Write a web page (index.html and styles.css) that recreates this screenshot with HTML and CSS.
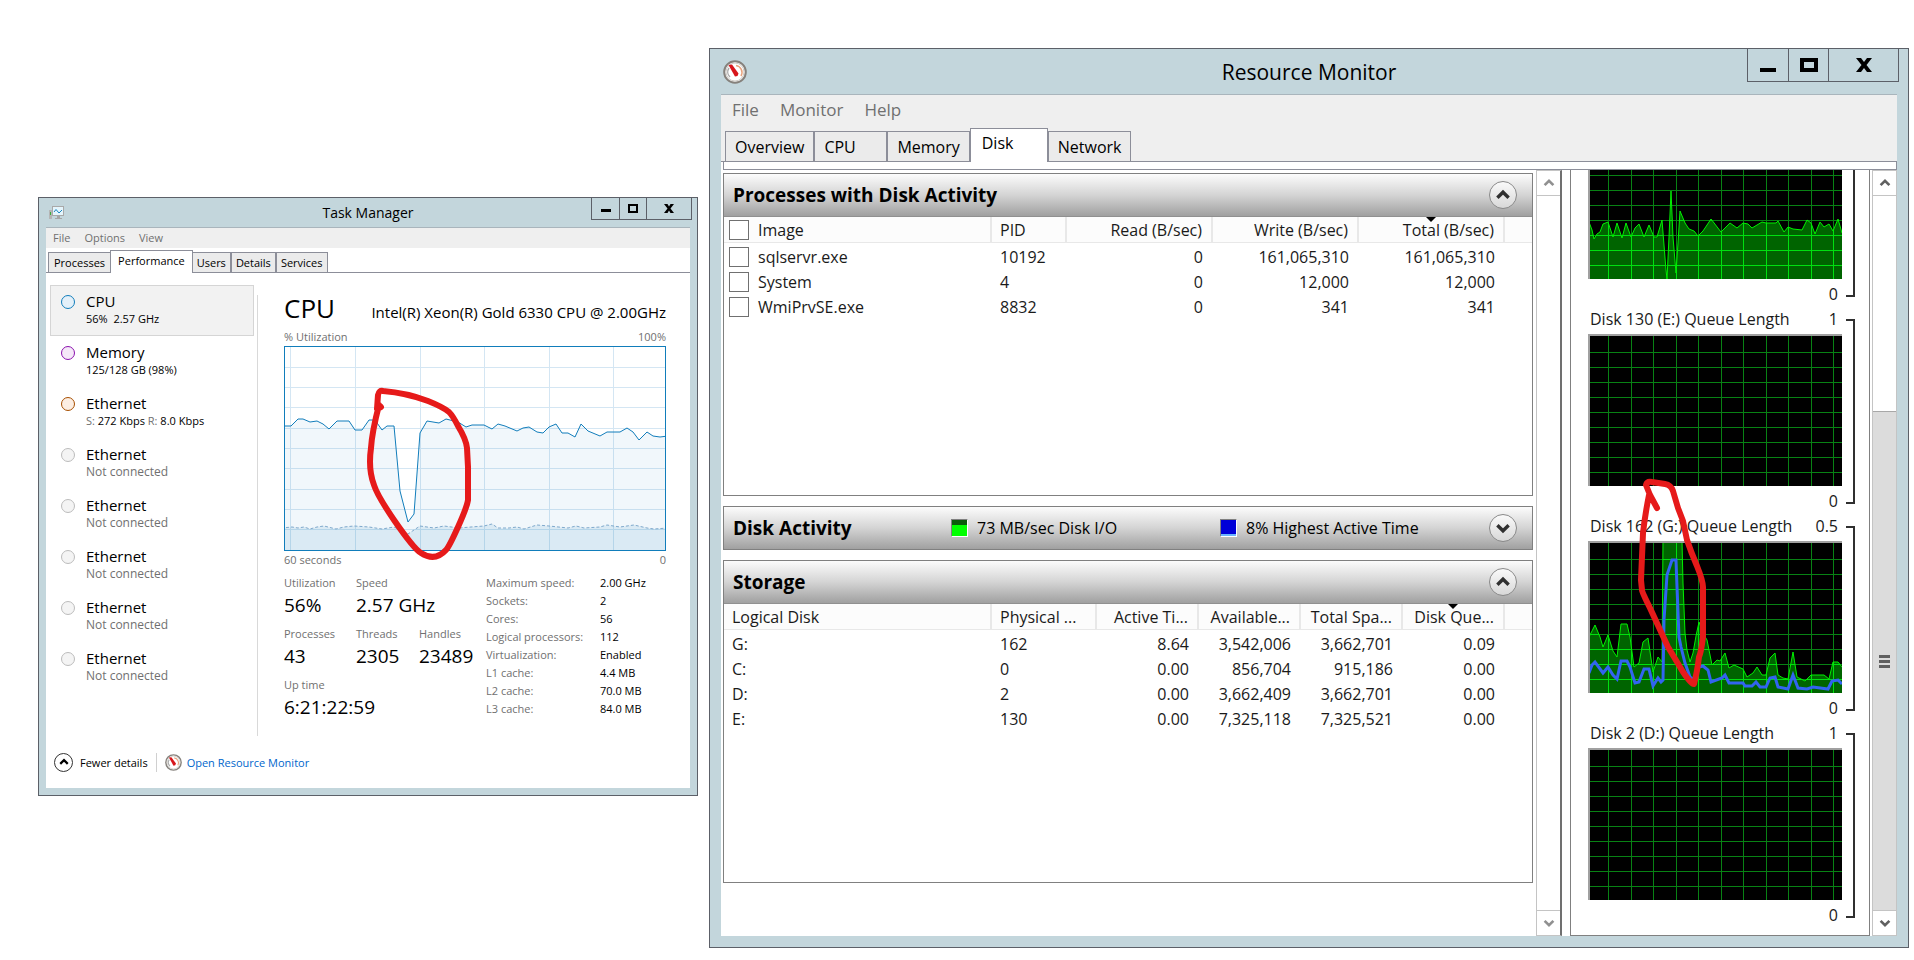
FILE: index.html
```
<!DOCTYPE html>
<html lang="en">
<head>
    <meta charset="UTF-8">
    <meta name="viewport" content="width=device-width, initial-scale=1.0">
    <title>Task Manager and Resource Monitor</title>
    <link rel="stylesheet" href="styles.css">
</head>
<body>
    <!-- Shared shapes -->
    <svg class="defs" width="0" height="0" aria-hidden="true">
        <defs>
            <path id="disk-grid" d="M20.5 0V152M43.5 0V152M65.5 0V152M88.5 0V152M110.5 0V152M133.5 0V152M155.5 0V152M178.5 0V152M200.5 0V152M223.5 0V152M245.5 0V152M0 18.5H254M0 33.5H254M0 48.5H254M0 63.5H254M0 78.5H254M0 93.5H254M0 108.5H254M0 123.5H254M0 138.5H254"/>
            <symbol id="gauge" viewBox="0 0 24 24">
                <circle cx="12" cy="12" r="10.8" fill="#f6f4f2" stroke="#85817c" stroke-width="2"/>
                <circle cx="12" cy="12" r="9" fill="#fff" stroke="#d0cdc8"/>
                <path d="M7 17A7 7 0 0 1 6 8" fill="none" stroke="#a9a9a9" stroke-width="1.5"/>
                <path d="M13 5.500A7 7 0 0 1 18 16" fill="none" stroke="#e8a27c" stroke-width="1.500"/>
                <path d="M5.500 5L9 4.500L15.500 13.500L14.500 16L12 16.500Z" fill="#d8161c"/>
            </symbol>
            <symbol id="up" viewBox="0 0 16 16"><path d="M3 10.500L8 5.500L13 10.500" fill="none" stroke="currentColor" stroke-width="3"/></symbol>
            <symbol id="down" viewBox="0 0 16 16"><path d="M3 5.500L8 10.500L13 5.500" fill="none" stroke="currentColor" stroke-width="3"/></symbol>
        </defs>
    </svg>

    <main class="desktop">
        <section class="window task-manager">
            <header class="title-bar">
                <svg class="title-icon" width="17" height="16" viewBox="0 0 17 16">
                    <rect x="1" y="5" width="3" height="9" fill="#b5b5b5"/>
                    <rect x="2" y="7" width="1" height="3" fill="#3cae3c"/>
                    <rect x="4.500" y="1.500" width="11" height="9" fill="#e4f5fc" stroke="#a9a9a9"/>
                    <path d="M6 7L8 4.500L11 8L14 5" fill="none" stroke="#1b87c0"/>
                    <path d="M9 11H12V13H14V14H7V13H9Z" fill="#a5a5a5"/>
                </svg>
                <h1>Task Manager</h1>
                <div class="caption-buttons">
                    <button aria-label="Minimize"><svg width="10" height="9" viewBox="0 0 10 9"><path d="M0 5H10V8H0Z"/></svg></button>
                    <button aria-label="Maximize"><svg width="10" height="9" viewBox="0 0 10 9"><path d="M0 0H10V9H0ZM2 2V7H8V2Z" fill-rule="evenodd"/></svg></button>
                    <button aria-label="Close"><svg width="10" height="9" viewBox="0 0 10 9"><path d="M0 0H3.500L5 2.500L6.500 0H10L6.500 4.500L10 9H6.500L5 6.500L3.500 9H0L3.500 4.500Z"/></svg></button>
                </div>
            </header>
            <div class="client">
                <nav class="menu">
                    <button>File</button>
                    <button>Options</button>
                    <button>View</button>
                </nav>
                <div class="tabs" role="tablist">
                    <button role="tab">Processes</button>
                    <button role="tab" class="selected" aria-selected="true">Performance</button>
                    <button role="tab">Users</button>
                    <button role="tab">Details</button>
                    <button role="tab">Services</button>
                </div>
                <div class="performance">
                    <div class="devices">
                        <button class="device selected"><i class="dot cpu"></i><span>CPU<small>56%&nbsp; 2.57 GHz</small></span></button>
                        <button class="device"><i class="dot memory"></i><span>Memory<small>125/128 GB (98%)</small></span></button>
                        <button class="device"><i class="dot ethernet"></i><span>Ethernet<small><em>S:</em> 272 Kbps <em>R:</em> 8.0 Kbps</small></span></button>
                        <button class="device off"><i class="dot"></i><span>Ethernet<small>Not connected</small></span></button>
                        <button class="device off"><i class="dot"></i><span>Ethernet<small>Not connected</small></span></button>
                        <button class="device off"><i class="dot"></i><span>Ethernet<small>Not connected</small></span></button>
                        <button class="device off"><i class="dot"></i><span>Ethernet<small>Not connected</small></span></button>
                        <button class="device off"><i class="dot"></i><span>Ethernet<small>Not connected</small></span></button>
                    </div>
                    <div class="cpu-detail">
                        <div class="cpu-heading">
                            <h2>CPU</h2>
                            <span>Intel(R) Xeon(R) Gold 6330 CPU @ 2.00GHz</span>
                        </div>
                        <div class="axis"><span>% Utilization</span><span>100%</span></div>
                        <div class="cpu-chart">
                            <svg class="plot" viewBox="1 1 380 203" preserveAspectRatio="none">
                                <path class="cpu-grid" d="M6.500 0V204M71.500 0V204M136.500 0V204M200.500 0V204M265.500 0V204M329.500 0V204M0 21.500H382M0 41.500H382M0 61.500H382M0 82.500H382M0 102.500H382M0 122.500H382M0 143.500H382M0 163.500H382M0 183.500H382"/>
                                <path class="cpu-area" d="M-2 208V80L7 80L14 73L19 73L26 76L33 75L39 78L45 83L53 75L65 75L71 84L78 84L85 74L91 74L98 84L103 80L110 80L116 145L124 176L130 168L136 87L143 75L155 77L162 73L174 76L182 81L188 79L200 79L208 83L214 78L221 80L233 85L239 82L245 81L253 86L259 87L265 81L272 78L278 87L284 87L291 91L297 78L304 85L316 90L323 86L329 86L336 86L343 82L349 86L355 94L363 86L369 90L376 91L384 90V208Z"/>
                                <path class="kernel-area" d="M-2 208V182L8 181L14 182L20 181L26 183L33 181L40 180L52 183L60 181L70 180L85 181L98 183L110 181L124 188L136 180L150 182L160 180L175 182L187 181L200 180L208 178L214 182L225 182L233 181L240 183L253 179L265 180L284 182L292 180L300 182L316 181L323 179L336 181L350 179L363 182L370 183L384 182V208Z"/>
                            </svg>
                            <svg class="ink" viewBox="0 0 382 204">
                                <path d="M96 60L92 62L93 48Q94 43 98 44Q122 46 143 54Q158 60 164 65Q168 69 173 79Q181 92 182 101L183 120L183 153Q182 160 173 180Q164 200 161 203Q150 215 136 206Q129 202 109 173Q92 148 89 138Q83 122 86 101Q87 85 94 58"/>
                            </svg>
                        </div>
                        <div class="axis"><span>60 seconds</span><span>0</span></div>
                        <div class="stats">
                            <div class="big-stats">
                                <dl><dt>Utilization</dt><dd>56%</dd></dl>
                                <dl class="wide"><dt>Speed</dt><dd>2.57 GHz</dd></dl>
                                <dl><dt>Processes</dt><dd>43</dd></dl>
                                <dl><dt>Threads</dt><dd>2305</dd></dl>
                                <dl><dt>Handles</dt><dd>23489</dd></dl>
                                <dl class="full"><dt>Up time</dt><dd>6:21:22:59</dd></dl>
                            </div>
                            <dl class="facts">
                                <dt>Maximum speed:</dt><dd>2.00 GHz</dd>
                                <dt>Sockets:</dt><dd>2</dd>
                                <dt>Cores:</dt><dd>56</dd>
                                <dt>Logical processors:</dt><dd>112</dd>
                                <dt>Virtualization:</dt><dd>Enabled</dd>
                                <dt>L1 cache:</dt><dd>4.4 MB</dd>
                                <dt>L2 cache:</dt><dd>70.0 MB</dd>
                                <dt>L3 cache:</dt><dd>84.0 MB</dd>
                            </dl>
                        </div>
                    </div>
                </div>
                <footer class="task-footer">
                    <button class="fewer"><span class="ring"><svg width="12" height="12"><use href="#up"/></svg></span>Fewer details</button>
                    <a href="#resource-monitor"><svg width="17" height="17"><use href="#gauge"/></svg>Open Resource Monitor</a>
                </footer>
            </div>
        </section>

        <section class="window resource-monitor" id="resource-monitor">
            <header class="title-bar">
                <svg class="title-icon" width="24" height="24"><use href="#gauge"/></svg>
                <h1>Resource Monitor</h1>
                <div class="caption-buttons">
                    <button aria-label="Minimize"><svg width="16" height="14" viewBox="0 0 16 14"><path d="M0 10H16V14H0Z"/></svg></button>
                    <button aria-label="Maximize"><svg width="18" height="14" viewBox="0 0 18 14"><path d="M0 0H18V14H0ZM4 4V10H14V4Z" fill-rule="evenodd"/></svg></button>
                    <button aria-label="Close"><svg width="16" height="14" viewBox="0 0 16 14"><path d="M0 0H5L8 4L11 0H16L10.500 7L16 14H11L8 10L5 14H0L5.500 7Z"/></svg></button>
                </div>
            </header>
            <div class="client">
                <nav class="menu">
                    <button>File</button>
                    <button>Monitor</button>
                    <button>Help</button>
                </nav>
                <div class="tabs" role="tablist">
                    <button role="tab">Overview</button>
                    <button role="tab" class="short">CPU</button>
                    <button role="tab">Memory</button>
                    <button role="tab" class="short selected" aria-selected="true">Disk</button>
                    <button role="tab">Network</button>
                </div>
                <div class="strip"></div>
                <div class="monitor-body">
                    <div class="panels">
                        <section class="panel">
                            <header><h2>Processes with Disk Activity</h2><button class="toggle" aria-label="Collapse"><svg width="18" height="18"><use href="#up"/></svg></button></header>
                            <div class="list">
                                <table>
                                    <colgroup><col><col class="w-pid"><col class="w-rate"><col class="w-rate"><col class="w-rate"><col class="w-rest"></colgroup>
                                    <thead>
                                        <tr><th><label><input type="checkbox">Image</label></th><th>PID</th><th class="num">Read (B/sec)</th><th class="num">Write (B/sec)</th><th class="num sorted">Total (B/sec)</th><th></th></tr>
                                    </thead>
                                    <tbody>
                                        <tr><td><label><input type="checkbox">sqlservr.exe</label></td><td>10192</td><td class="num">0</td><td class="num">161,065,310</td><td class="num">161,065,310</td><td></td></tr>
                                        <tr><td><label><input type="checkbox">System</label></td><td>4</td><td class="num">0</td><td class="num">12,000</td><td class="num">12,000</td><td></td></tr>
                                        <tr><td><label><input type="checkbox">WmiPrvSE.exe</label></td><td>8832</td><td class="num">0</td><td class="num">341</td><td class="num">341</td><td></td></tr>
                                    </tbody>
                                </table>
                            </div>
                        </section>
                        <section class="panel">
                            <header>
                                <h2>Disk Activity</h2>
                                <span class="legend"><i class="swatch io"></i>73 MB/sec Disk I/O</span>
                                <span class="legend"><i class="swatch active"></i>8% Highest Active Time</span>
                                <button class="toggle" aria-label="Expand"><svg width="18" height="18"><use href="#down"/></svg></button>
                            </header>
                        </section>
                        <section class="panel">
                            <header><h2>Storage</h2><button class="toggle" aria-label="Collapse"><svg width="18" height="18"><use href="#up"/></svg></button></header>
                            <div class="list">
                                <table>
                                    <colgroup><col><col class="w-disk"><col class="w-size"><col class="w-size"><col class="w-size"><col class="w-size"><col class="w-rest"></colgroup>
                                    <thead>
                                        <tr><th>Logical Disk</th><th>Physical ...</th><th class="num">Active Ti...</th><th class="num">Available...</th><th class="num">Total Spa...</th><th class="num sorted">Disk Que...</th><th></th></tr>
                                    </thead>
                                    <tbody>
                                        <tr><td>G:</td><td>162</td><td class="num">8.64</td><td class="num">3,542,006</td><td class="num">3,662,701</td><td class="num">0.09</td><td></td></tr>
                                        <tr><td>C:</td><td>0</td><td class="num">0.00</td><td class="num">856,704</td><td class="num">915,186</td><td class="num">0.00</td><td></td></tr>
                                        <tr><td>D:</td><td>2</td><td class="num">0.00</td><td class="num">3,662,409</td><td class="num">3,662,701</td><td class="num">0.00</td><td></td></tr>
                                        <tr><td>E:</td><td>130</td><td class="num">0.00</td><td class="num">7,325,118</td><td class="num">7,325,521</td><td class="num">0.00</td><td></td></tr>
                                    </tbody>
                                </table>
                            </div>
                        </section>
                    </div>
                    <div class="scrollbar idle">
                        <button aria-label="Scroll up"><svg width="14" height="14"><use href="#up"/></svg></button>
                        <button aria-label="Scroll down"><svg width="14" height="14"><use href="#down"/></svg></button>
                    </div>
                    <div class="charts">
                        <div class="chart">
                            <svg class="screen" viewBox="2 2 252 150" preserveAspectRatio="none">
                                <clipPath id="clip-c"><path d="M1 152V95L4 103L6 112L9 107L12 105L15 97L20 95L25 110L29 96L34 111L38 96L43 110L47 101L51 97L56 110L61 98L66 110L69 110L74 93L78 143L79 152L81 110L83 64L85 110L88 146L90 116L92 84L97 96L101 102L106 104L110 109L115 104L123 92L133 105L142 96L149 101L155 96L160 97L164 101L174 95L178 96L188 96L190 94L196 105L200 100L205 102L214 103L219 93L223 96L227 107L232 95L236 100L241 97L245 104L250 92L254 106V152Z"/></clipPath>
                                <use href="#disk-grid" class="grid-line"/>
                                <g clip-path="url(#clip-c)"><rect width="254" height="152" class="fill"/><use href="#disk-grid" class="grid-bright"/></g>
                                <path class="trace" d="M1 95L4 103L6 112L9 107L12 105L15 97L20 95L25 110L29 96L34 111L38 96L43 110L47 101L51 97L56 110L61 98L66 110L69 110L74 93L78 143L79 152L81 110L83 64L85 110L88 146L90 116L92 84L97 96L101 102L106 104L110 109L115 104L123 92L133 105L142 96L149 101L155 96L160 97L164 101L174 95L178 96L188 96L190 94L196 105L200 100L205 102L214 103L219 93L223 96L227 107L232 95L236 100L241 97L245 104L250 92L254 106"/>
                            </svg>
                            <div class="chart-zero">0</div>
                            <i class="bracket"></i>
                        </div>
                        <div class="chart">
                            <div class="chart-label"><span>Disk 130 (E:) Queue Length</span><span>1</span></div>
                            <svg class="screen" viewBox="2 2 252 150" preserveAspectRatio="none"><use href="#disk-grid" class="grid-line"/></svg>
                            <div class="chart-zero">0</div>
                            <i class="bracket"></i>
                        </div>
                        <div class="chart">
                            <div class="chart-label"><span>Disk 162 (G:) Queue Length</span><span>0.5</span></div>
                            <svg class="screen" viewBox="2 2 252 150" preserveAspectRatio="none">
                                <clipPath id="clip-g"><path d="M1 152V96L7 84L12 96L15 106L20 94L25 110L29 116L33 83L39 83L42 96L46 126L51 122L55 101L60 97L65 131L70 116L74 121L75 0L94 0L95 42L97 92L99 109L102 121L105 112L108 95L111 81L115 92L119 99L124 124L129 119L132 120L137 112L141 127L146 124L155 128L159 136L165 132L169 126L174 134L178 134L182 117L187 112L190 134L195 137L200 138L205 111L209 136L217 140L223 134L236 134L241 138L245 121L250 121L254 126V152Z"/></clipPath>
                                <use href="#disk-grid" class="grid-line"/>
                                <g clip-path="url(#clip-g)"><rect width="254" height="152" class="fill"/><use href="#disk-grid" class="grid-bright"/></g>
                                <path class="trace" d="M1 96L7 84L12 96L15 106L20 94L25 110L29 116L33 83L39 83L42 96L46 126L51 122L55 101L60 97L65 131L70 116L74 121L75 0M94 0L95 42L97 92L99 109L102 121L105 112L108 95L111 81L115 92L119 99L124 124L129 119L132 120L137 112L141 127L146 124L155 128L159 136L165 132L169 126L174 134L178 134L182 117L187 112L190 134L195 137L200 138L205 111L209 136L217 140L223 134L236 134L241 138L245 121L250 121L254 126"/>
                                <path class="trace-blue" d="M1 132L4 124L7 121L15 132L20 126L25 134L29 138L33 120L39 120L42 126L47 142L51 141L56 128L61 128L65 145L70 137L73 141L75 139L76 79L79 34L84 19L88 19L89 46L91 96L93 106L97 122L102 136L107 139L111 126L115 125L120 129L123 141L134 137L137 134L141 142L155 142L157 145L164 145L168 141L172 146L178 146L182 137L187 136L190 146L200 148L205 134L210 147L219 148L225 146L240 148L244 140L250 139L254 143"/>
                            </svg>
                            <svg class="ink" viewBox="0 0 254 152">
                                <path d="M69 -33L62 -46L58 -56Q59 -60 64 -59L77 -57Q83 -56 85 -50L90 -33L95 -20L99 -1Q103 11 109 25Q115 40 115 46L115 96Q113 112 111 116Q109 132 106 143Q104 144 95 131L80 106L62 67Q54 51 54 49L53 39L55 -8Q57 -26 61 -46"/>
                            </svg>
                            <div class="chart-zero">0</div>
                            <i class="bracket"></i>
                        </div>
                        <div class="chart">
                            <div class="chart-label"><span>Disk 2 (D:) Queue Length</span><span>1</span></div>
                            <svg class="screen" viewBox="2 2 252 150" preserveAspectRatio="none"><use href="#disk-grid" class="grid-line"/></svg>
                            <div class="chart-zero">0</div>
                            <i class="bracket"></i>
                        </div>
                    </div>
                    <div class="scrollbar">
                        <button aria-label="Scroll up"><svg width="14" height="14"><use href="#up"/></svg></button>
                        <div class="thumb"><i></i><i></i><i></i></div>
                        <button aria-label="Scroll down"><svg width="14" height="14"><use href="#down"/></svg></button>
                    </div>
                </div>
            </div>
        </section>
    </main>
</body>
</html>
```
FILE: styles.css
```
* {
    box-sizing: border-box;
}

body {
    margin: 0;
    background-color: #ffffff;
    color: #000000;
    font-family: "Open Sans", "Noto Sans", sans-serif;
}

button {
    margin: 0;
    padding: 0;
    border: none;
    background: none;
    color: inherit;
    font: inherit;
}

h1, h2, dl, dd {
    margin: 0;
    font-weight: normal;
}

svg {
    display: block;
}

.defs {
    position: absolute;
}

.desktop {
    display: grid;
    grid-template-columns: minmax(0, 11fr) minmax(0, 20fr);
    gap: 11px;
    align-items: start;
    padding: 48px 5px 8px 38px;
}

/* Window frame */
.window {
    border: 1px solid #5c6068;
    background-color: #c3d6dc;
}

.title-bar {
    display: grid;
    grid-template-columns: 1fr auto 1fr;
    align-items: center;
}

.caption-buttons {
    display: flex;
    justify-self: end;
    align-self: start;
    border: 1px solid #5c6068;
    border-top: none;
}

.caption-buttons button {
    display: flex;
    align-items: center;
    justify-content: center;
}

.caption-buttons button + button {
    border-left: 1px solid #5c6068;
}

.client {
    border-top: 1px solid #a9b5bc;
    background-color: #ffffff;
}

.menu {
    display: flex;
    padding-bottom: 2px;
    background-color: #efefef;
    color: #707070;
}

.tabs {
    display: flex;
    align-items: flex-end;
    border-bottom: 1px solid #8c8e99;
}

.tabs button {
    border: 1px solid #8c8e99;
    border-bottom: none;
    background-color: #ebebeb;
}

.tabs .selected {
    margin: 0 -1px -1px;
    background-color: #ffffff;
    z-index: 1;
}

.ink {
    position: absolute;
    overflow: visible;
    fill: none;
    stroke: #e61a1a;
    stroke-linecap: round;
    stroke-linejoin: round;
}

/* Task Manager */
.task-manager {
    margin-top: 149px;
    padding: 0 7px 7px;
    font-size: 11px;
}

.task-manager .title-bar {
    height: 29px;
}

.task-manager h1 {
    font-size: 14px;
}

.task-manager .title-icon {
    margin-left: 2px;
}

.task-manager .caption-buttons {
    margin-right: -2px;
}

.task-manager .caption-buttons button {
    width: 27px;
    height: 21px;
}

.task-manager .caption-buttons button:last-child {
    width: 45px;
}

.task-manager .menu {
    gap: 14px;
    height: 20px;
    padding-left: 7px;
}

.task-manager .tabs {
    height: 25px;
    padding-left: 2px;
}

.task-manager .tabs button {
    height: 20px;
    padding: 0 4px;
}

.task-manager .tabs button:first-child {
    padding: 0 5px;
}

.task-manager .tabs .selected {
    height: 23px;
    padding: 0 7px 4px;
}

.performance {
    display: flex;
    padding: 12px 24px 0 4px;
}

.devices {
    width: 204px;
}

.device {
    display: flex;
    gap: 11px;
    width: 100%;
    height: 51px;
    padding: 7px 10px 9px;
    border: 1px solid transparent;
    text-align: left;
    font-size: 15px;
    line-height: 17px;
}

.device.selected {
    border-color: #d5d5d5;
    background-color: #f2f2f2;
}

.device small {
    display: block;
    font-size: 11px;
}

.device em {
    color: #707070;
    font-style: normal;
}

.device.off small {
    font-size: 12px;
    color: #707070;
}

.dot {
    width: 14px;
    height: 14px;
    margin-top: 2px;
    border: 1px solid #bcbcbc;
    border-radius: 50%;
    background-color: #f4f4f4;
}

.dot.cpu {
    border-color: #117dbb;
    background-color: #e4f0f9;
}

.dot.memory {
    border-color: #8b12ae;
    background-color: #f5e8f8;
}

.dot.ethernet {
    border-color: #a74f01;
    background-color: #fceee3;
}

.cpu-detail {
    flex: 1;
    height: 441px;
    margin: 10px 0 0 3px;
    padding-left: 26px;
    border-left: 1px solid #d9d9d9;
}

.cpu-heading {
    display: flex;
    justify-content: space-between;
    align-items: baseline;
    height: 33px;
    line-height: 26px;
    font-size: 15px;
}

.cpu-heading h2 {
    font-size: 26px;
}

.axis {
    display: flex;
    justify-content: space-between;
    height: 18px;
    line-height: 18px;
    color: #707070;
}

.cpu-chart {
    position: relative;
    height: 205px;
    border: 1px solid #117dbb;
}

.cpu-chart .ink {
    top: 0;
    left: 0;
    width: 382px;
    height: 204px;
    stroke-width: 6;
}

.plot {
    width: 100%;
    height: 100%;
}

.cpu-grid {
    stroke: #d4e6f3;
}

.cpu-area {
    fill: #117dbb;
    fill-opacity: 0.06;
    stroke: #117dbb;
}

.kernel-area {
    fill: #117dbb;
    fill-opacity: 0.1;
    stroke: #7fa9cc;
    stroke-dasharray: 3 2;
}

.stats {
    display: flex;
    justify-content: space-between;
    padding-top: 5px;
}

.stats dt {
    color: #707070;
}

.big-stats {
    display: grid;
    grid-template-columns: 72px 63px 62px;
    grid-auto-rows: 51px;
}

.big-stats dt {
    line-height: 18px;
}

.big-stats dd {
    font-size: 19px;
    line-height: 27px;
}

.big-stats .wide {
    grid-column: span 2;
}

.big-stats .full {
    grid-column: 1 / -1;
}

.facts {
    display: grid;
    grid-template-columns: 114px 66px;
    grid-auto-rows: 18px;
    line-height: 18px;
}

.task-footer {
    display: flex;
    align-items: center;
    height: 52px;
    padding-left: 8px;
}

.fewer {
    display: flex;
    align-items: center;
    gap: 7px;
    padding-right: 8px;
    border-right: 1px solid #d0d0d0;
}

.ring {
    display: flex;
    align-items: center;
    justify-content: center;
    width: 19px;
    height: 19px;
    border: 1px solid #333333;
    border-radius: 50%;
}

.task-footer a {
    display: flex;
    align-items: center;
    gap: 5px;
    padding-left: 8px;
    color: #0066cc;
    text-decoration: none;
}

/* Resource Monitor */
.resource-monitor {
    padding: 0 11px 11px;
    font-size: 16px;
}

.resource-monitor .title-bar {
    height: 45px;
}

.resource-monitor h1 {
    font-size: 21px;
}

.resource-monitor .title-icon {
    margin-left: 2px;
}

.resource-monitor .caption-buttons {
    margin-right: -2px;
}

.resource-monitor .caption-buttons button {
    width: 40px;
    height: 32px;
}

.resource-monitor .caption-buttons button:last-child {
    width: 70px;
}

.resource-monitor .menu {
    gap: 21px;
    height: 31px;
    padding-left: 11px;
    font-size: 17px;
}

.resource-monitor .tabs {
    height: 36px;
    padding-left: 4px;
    background-color: #efefef;
}

.resource-monitor .tabs button {
    height: 30px;
    padding: 0 9px;
    text-align: left;
}

.resource-monitor .tabs .short {
    width: 73px;
}

.resource-monitor .tabs .selected {
    width: 78px;
    height: 34px;
    margin: 0 0 -1px;
    padding: 0 11px 5px;
}

.strip {
    height: 8px;
    margin-left: 2px;
    border: solid #8c8e99;
    border-width: 0 1px 1px;
}

.monitor-body {
    display: grid;
    grid-template-columns: minmax(0, 1fr) 26px 310px 25px;
    padding-left: 2px;
}

.panels {
    display: flex;
    flex-direction: column;
    gap: 10px;
    padding: 3px 3px 53px 0;
}

.panel {
    border: 1px solid #808080;
}

.panel header {
    display: flex;
    align-items: center;
    height: 42px;
    padding: 0 15px 0 9px;
    background: linear-gradient(#fcfcfc, #d4d4d4 50%, #a0a0a0);
}

.panel h2 {
    flex-shrink: 0;
    width: 218px;
    font-size: 19px;
    font-weight: bold;
    white-space: nowrap;
}

.toggle {
    display: flex;
    align-items: center;
    justify-content: center;
    flex-shrink: 0;
    width: 28px;
    height: 28px;
    margin-left: auto;
    border: 1px solid #8a8a8a;
    border-radius: 50%;
    background: linear-gradient(#fafafa, #d8d8d8);
    color: #303030;
}

.legend {
    display: flex;
    align-items: center;
    gap: 9px;
    flex-basis: 273px;
    white-space: nowrap;
}

.swatch {
    width: 17px;
    height: 18px;
    border: 1px solid #808080;
    border-right-color: #ffffff;
    border-bottom-color: #ffffff;
}

.swatch.io {
    background: linear-gradient(#0a5c0a 5px, #00ff00 5px);
}

.swatch.active {
    background: linear-gradient(#0000d8 14px, #6ab4ff 14px);
}

.list {
    height: 279px;
    border-top: 1px solid #909090;
}

table {
    width: 100%;
    border-spacing: 0;
    table-layout: fixed;
    line-height: 22px;
    color: #1a1a1a;
}

.w-pid {
    width: 75px;
}

.w-rate {
    width: 146px;
}

.w-disk {
    width: 105px;
}

.w-size {
    width: 102px;
}

.w-rest {
    width: 27px;
}

th {
    position: relative;
    height: 26px;
    padding: 0 9px 0 8px;
    border-right: 2px solid #e8e8e8;
    border-bottom: 1px solid #e8e8e8;
    background-color: #fcfcfc;
    font-weight: normal;
    text-align: left;
    white-space: nowrap;
}

th:last-child {
    border-right: none;
}

td {
    height: 25px;
    padding: 0 10px 0 8px;
}

tbody tr:first-child td {
    height: 26px;
    padding-top: 1px;
}

th.num, td.num {
    text-align: right;
}

th.sorted::after {
    content: "";
    position: absolute;
    top: 0;
    left: calc(50% - 5px);
    border: 5px solid transparent;
    border-top-color: #000000;
    border-bottom: none;
}

table label {
    display: flex;
    align-items: center;
    gap: 9px;
    margin-left: -3px;
}

input[type="checkbox"] {
    appearance: none;
    width: 20px;
    height: 20px;
    margin: 0;
    border: 1px solid #707070;
    background-color: #ffffff;
}

.scrollbar {
    display: flex;
    flex-direction: column;
    justify-content: space-between;
    border: 1px solid #c4c4c4;
    color: #606060;
}

.scrollbar.idle {
    border-right: 2px solid #707070;
    color: #909090;
}

.scrollbar button {
    display: flex;
    align-items: center;
    justify-content: center;
    height: 25px;
    border-bottom: 1px solid #c4c4c4;
}

.scrollbar button:last-child {
    border-top: 1px solid #c4c4c4;
    border-bottom: none;
}

.thumb {
    display: flex;
    flex-direction: column;
    align-items: center;
    justify-content: center;
    gap: 2px;
    height: 499px;
    margin-top: auto;
    border-top: 1px solid #a8a8a8;
    background-color: #dcdcdc;
}

.thumb i {
    width: 11px;
    height: 3px;
    background-color: #606060;
}

/* Disk graphs, scrolled down so that the first one is cut off */
.charts {
    contain: size;
    display: flex;
    flex-direction: column;
    justify-content: flex-end;
    overflow: hidden;
    margin: 0 2px 0 8px;
    padding: 0 14px 10px 17px;
    border: 1px solid #808080;
    border-top: none;
    color: #1a1a1a;
}

.chart {
    position: relative;
    display: grid;
    grid-template-columns: 1fr 9px;
    grid-template-rows: 30px 152px 25px;
    column-gap: 4px;
    flex-shrink: 0;
}

.chart-label {
    display: flex;
    justify-content: space-between;
    padding: 0 4px 0 2px;
    line-height: 30px;
    white-space: nowrap;
}

.chart-zero {
    grid-area: 3 / 1;
    padding-right: 4px;
    line-height: 30px;
    text-align: right;
}

.bracket {
    grid-area: 1 / 2 / 4 / 3;
    margin: 15px 0 7px;
    border: 2px solid #303030;
    border-left: none;
}

.screen {
    grid-area: 2 / 1;
    width: 100%;
    height: 100%;
    border: solid #a0a0a0;
    border-width: 2px 0 0 2px;
    background-color: #000000;
}

.chart .ink {
    top: 30px;
    left: 0;
    width: 254px;
    height: 152px;
    stroke-width: 6;
}

.grid-line {
    stroke: #088214;
}

.grid-bright {
    stroke: #00e010;
}

.fill {
    fill: #006400;
}

.trace {
    fill: none;
    stroke: #00f000;
}

.trace-blue {
    fill: none;
    stroke: #3264f0;
    stroke-width: 3;
}
```
